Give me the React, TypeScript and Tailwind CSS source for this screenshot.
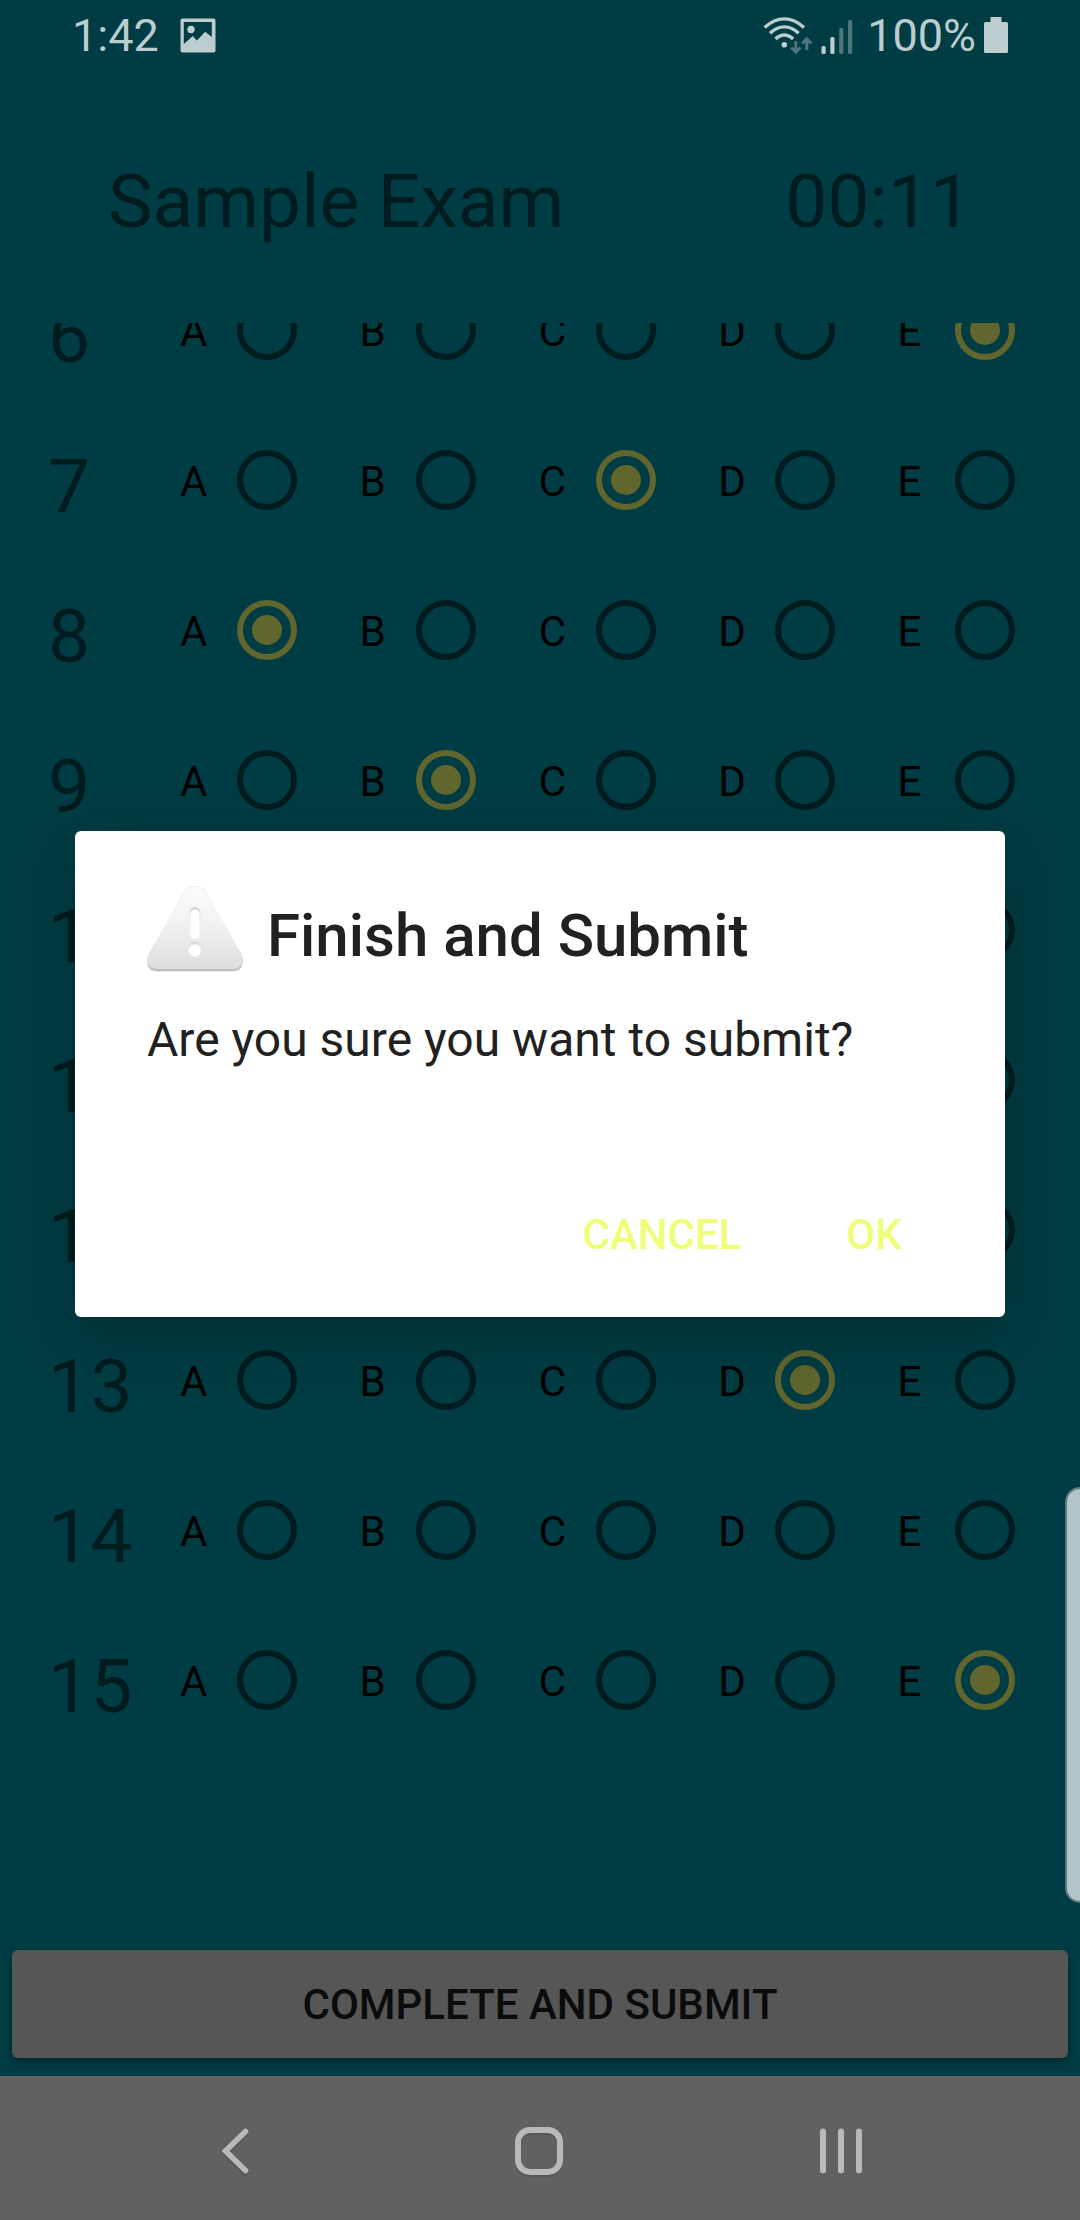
const LETTERS = ["A", "B", "C", "D", "E"];

const QUESTIONS: { number: number; answer?: string }[] = [
  { number: 6, answer: "E" },
  { number: 7, answer: "C" },
  { number: 8, answer: "A" },
  { number: 9, answer: "B" },
  { number: 10 },
  { number: 11 },
  { number: 12 },
  { number: 13, answer: "D" },
  { number: 14 },
  { number: 15, answer: "E" },
];

function ImageIcon() {
  return (
    <svg className="h-9 w-9" viewBox="0 0 36 36" aria-hidden="true">
      <path
        fill="#bccccf"
        fillRule="evenodd"
        d="M2.500 0.500h31a2 2 0 0 1 2 2v30a2 2 0 0 1-2 2h-31a2 2 0 0 1-2-2v-30a2 2 0 0 1 2-2zM3.800 4V26l9-8 4 4.500 8.400-8.700 6.600 5.200V4z"
      />
      <circle cx="11" cy="11.500" r="3.700" fill="#bccccf" />
    </svg>
  );
}

function WifiIcon() {
  return (
    <svg className="h-10 w-[50px]" viewBox="0 0 50 40" aria-hidden="true">
      <g fill="none" stroke="#bccccf" strokeWidth="3.400">
        <path d="M1.600 11.500Q11 2.900 21.300 2.900T41 11.500" />
        <path d="M7 17.300Q13.500 10.900 21.300 10.900T35.600 17.300" />
        <path d="M12.500 23Q16.500 19 21.300 19T30.100 23" />
      </g>
      <circle cx="21.300" cy="28.700" r="2.800" fill="#bccccf" />
      <g fill="none" stroke="#4d777c" strokeWidth="3">
        <path d="M32.800 25v11M28.200 31.500l4.600 4.600 4.600-4.600" />
        <path d="M43.800 34V23M39.200 27.500l4.600-4.600 4.600 4.600" />
      </g>
    </svg>
  );
}

function SignalIcon() {
  return (
    <svg className="h-10 w-8" viewBox="0 0 32 40" aria-hidden="true">
      <rect x="0.500" y="30" width="4.200" height="8" rx="1.500" fill="#bccccf" />
      <rect x="9.300" y="21" width="4.200" height="17" rx="1.500" fill="#bccccf" />
      <rect x="18.200" y="12" width="4.200" height="26" rx="1.500" fill="#4d777c" />
      <rect x="27" y="4" width="4.200" height="34" rx="1.500" fill="#4d777c" />
    </svg>
  );
}

function BatteryIcon() {
  return (
    <svg className="h-[38px] w-6" viewBox="0 0 24 38" aria-hidden="true">
      <path
        fill="#bccccf"
        d="M6.500 0h11v5h5a1.500 1.500 0 0 1 1.500 1.500v28a1.500 1.500 0 0 1-1.500 1.500h-21A1.500 1.500 0 0 1 0 34.500v-28A1.500 1.500 0 0 1 1.500 5H6.500z"
      />
    </svg>
  );
}

function WarningIcon() {
  return (
    <svg className="h-[100px] w-24 shrink-0" viewBox="0 0 96 100" aria-hidden="true">
      <defs>
        <linearGradient id="face" x1="0" y1="0" x2="0" y2="1">
          <stop offset="0" stopColor="#fcfcfc" />
          <stop offset="0.450" stopColor="#f2f2f2" />
          <stop offset="1" stopColor="#dedede" />
        </linearGradient>
        <linearGradient id="cut" x1="0" y1="0" x2="0" y2="1">
          <stop offset="0" stopColor="#cfcfcf" />
          <stop offset="0.250" stopColor="#e6e6e6" />
          <stop offset="1" stopColor="#f4f4f4" />
        </linearGradient>
      </defs>
      <path d="M38 5Q48-4 58 5L95 72Q98 86 85 86H11Q-2 86 1 72Z" fill="#ebebeb" />
      <path d="M38 4Q48-4 58 4L95 71Q98 85 85 85H11Q-2 85 1 71Z" fill="#bdbdbd" />
      <path d="M38 4Q48-4 58 4L95 69Q98 83 85 83H11Q-2 83 1 69Z" fill="url(#face)" />
      <rect x="42.500" y="21" width="11" height="31" rx="5.500" fill="url(#cut)" />
      <rect x="43.500" y="23.500" width="9" height="29" rx="4.500" fill="#fff" />
      <circle cx="47.800" cy="62.500" r="6.800" fill="url(#cut)" />
      <circle cx="47.800" cy="64.500" r="6" fill="#fff" />
    </svg>
  );
}

function StatusBar() {
  return (
    <div className="flex h-[72px] items-center justify-between px-[72px] text-[45px] leading-[54px] text-[#bccccf]">
      <div className="flex items-center gap-[21px]">
        <span>1:42</span>
        <ImageIcon />
      </div>
      <div className="flex items-center">
        <WifiIcon />
        <span className="ml-2">
          <SignalIcon />
        </span>
        <span className="mr-2 ml-3.5">100%</span>
        <BatteryIcon />
      </div>
    </div>
  );
}

function QuestionRow({ number, answer }: { number: number; answer?: string }) {
  return (
    <fieldset className="flex h-[150px] items-center pr-[3px] pl-12">
      <div className="w-[132px] shrink-0 pt-3 text-[75px] leading-[88px] text-[#001c1f]">{number}</div>
      <div className="grid flex-1 grid-cols-5">
        {LETTERS.map((letter) => (
          <label key={letter} className="flex items-center text-[42px] leading-[50px] text-black">
            <span className="w-[57px] pt-1">{letter}</span>
            <input
              type="radio"
              name={`question-${number}`}
              value={letter}
              defaultChecked={letter === answer}
              className="grid size-[60px] appearance-none place-items-center rounded-full border-6 border-[#001c1f] before:size-[30px] before:rounded-full checked:border-[#60662e] checked:before:bg-[#60662e]"
            />
          </label>
        ))}
      </div>
    </fieldset>
  );
}

function NavigationBar() {
  return (
    <nav className="flex h-36 items-center justify-between bg-[#616161] pt-2 pr-[207px] pl-[204px]">
      <button type="button" aria-label="Back" className="flex size-16 items-center justify-center">
        <svg className="h-[52px] w-16" viewBox="0 0 64 52" fill="none" strokeWidth="5.500" strokeLinecap="round">
          <path d="M41.500 7L21.500 27l20 20" stroke="#565656" />
          <path d="M41.500 5.500L21.500 25l20 19.500" stroke="#b9b9b9" strokeLinejoin="miter" />
        </svg>
      </button>
      <button type="button" aria-label="Home" className="flex size-16 items-center justify-center">
        <svg className="h-[52px] w-[52px]" viewBox="0 0 52 52" fill="none" strokeWidth="6">
          <rect x="5" y="6" width="42" height="42" rx="12" stroke="#585858" />
          <rect x="5" y="4" width="42" height="42" rx="12" stroke="#b9b9b9" />
        </svg>
      </button>
      <button type="button" aria-label="Recent apps" className="flex size-16 items-center justify-center">
        <svg className="h-[52px] w-[52px]" viewBox="0 0 52 52" strokeWidth="6" strokeLinecap="round">
          <path d="M8 7v39M26 7v39M44 7v39" stroke="#585858" />
          <path d="M8 5.500v39M26 5.500v39M44 5.500v39" stroke="#b9b9b9" />
        </svg>
      </button>
    </nav>
  );
}

function SubmitDialog() {
  return (
    <div className="absolute inset-0 flex items-center justify-center px-[75px] pt-[72px] pb-36">
      <div
        role="alertdialog"
        aria-labelledby="dialog-title"
        aria-describedby="dialog-message"
        className="w-full rounded-[6px] bg-white pt-[55px] pb-[35px] text-[#212121] shadow-[0_20px_60px_rgba(0,0,0,0.24)]"
      >
        <div className="flex items-center gap-6 px-[72px]">
          <WarningIcon />
          <h2 id="dialog-title" className="text-[60px] leading-[70px] font-medium">
            Finish and Submit
          </h2>
        </div>
        <p id="dialog-message" className="mt-[26px] px-[72px] text-[48px] leading-[56px]">
          Are you sure you want to submit?
        </p>
        <div className="mt-[118px] flex justify-end gap-5 pr-[35px] text-[42px] font-medium text-[#f0fd78]">
          <button type="button" className="h-24 min-w-48">
            CANCEL
          </button>
          <button type="button" className="h-24 min-w-48">
            OK
          </button>
        </div>
      </div>
    </div>
  );
}

export default function App() {
  return (
    <div className="relative flex min-h-screen flex-col overflow-hidden bg-[#003c43] font-['Roboto',sans-serif]">
      <StatusBar />
      <header className="flex justify-between px-[108px] pt-[85px] pb-[78px] text-[75px] leading-[88px] text-[#001c1f]">
        <h1>Sample Exam</h1>
        <time>00:11</time>
      </header>
      <main className="flex-1 overflow-hidden">
        <div className="-mt-[68px]">
          {QUESTIONS.map((question) => (
            <QuestionRow key={question.number} {...question} />
          ))}
        </div>
      </main>
      <div className="px-3 pb-[18px]">
        <button
          type="button"
          className="h-[108px] w-full rounded-[6px] bg-[#565656] text-[42px] font-medium text-[#0b0b0b] shadow-[0_5px_9px_rgba(0,0,0,0.3)]"
        >
          COMPLETE AND SUBMIT
        </button>
      </div>
      <NavigationBar />
      <SubmitDialog />
      <div className="absolute top-[1487px] right-0 h-[416px] w-[15px] rounded-l-[16px] border-2 border-r-0 border-[#5c7b7f] bg-[#b2c4c8]" />
    </div>
  );
}
